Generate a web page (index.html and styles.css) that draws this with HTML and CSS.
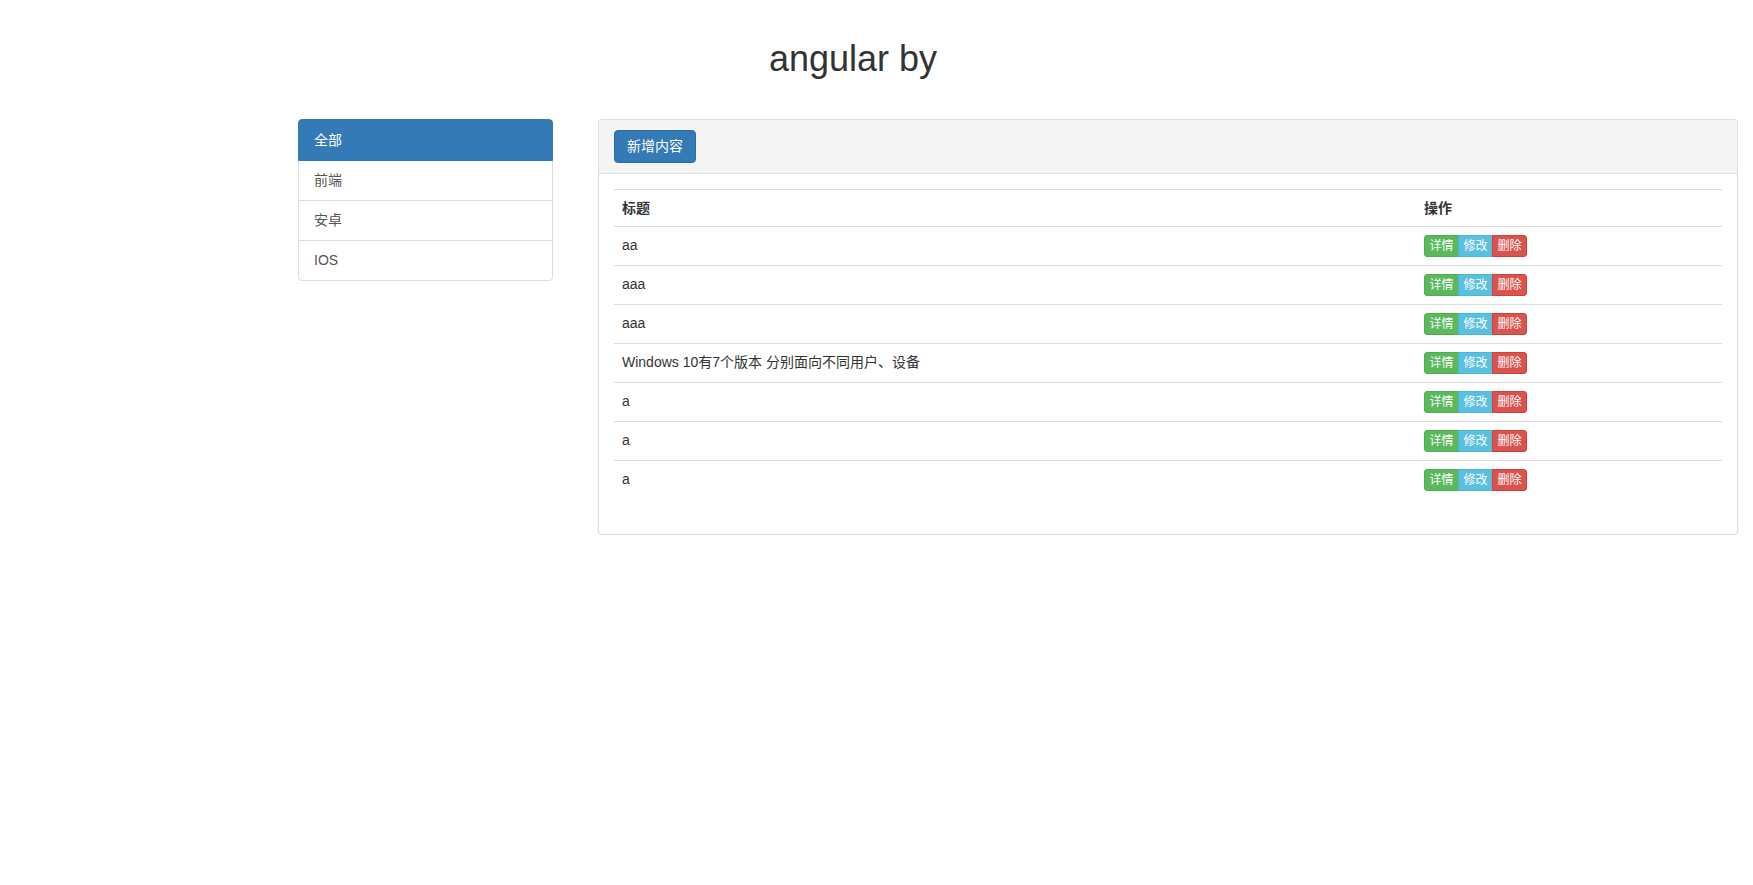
FILE: index.html
```html
<!DOCTYPE html>
<html lang="zh-CN">
<head>
<meta charset="utf-8">
<title>angular by</title>
<link rel="stylesheet" href="styles.css">
</head>
<body>
<header class="page-header">
  <h1 class="page-title">angular by</h1>
</header>
<main class="layout">
  <nav class="list-group">
    <a class="list-group-item active" href="#">全部</a>
    <a class="list-group-item" href="#">前端</a>
    <a class="list-group-item" href="#">安卓</a>
    <a class="list-group-item" href="#">IOS</a>
  </nav>
  <section class="panel">
    <div class="panel-heading">
      <button class="btn btn-primary" type="button">新增内容</button>
    </div>
    <div class="panel-body">
      <table class="table">
        <tbody>
          <tr><th class="col-title">标题</th><th>操作</th></tr>
          <tr><td>aa</td><td><div class="btn-group"><button class="btn-xs btn-success">详情</button><button class="btn-xs btn-info">修改</button><button class="btn-xs btn-danger">删除</button></div></td></tr>
          <tr><td>aaa</td><td><div class="btn-group"><button class="btn-xs btn-success">详情</button><button class="btn-xs btn-info">修改</button><button class="btn-xs btn-danger">删除</button></div></td></tr>
          <tr><td>aaa</td><td><div class="btn-group"><button class="btn-xs btn-success">详情</button><button class="btn-xs btn-info">修改</button><button class="btn-xs btn-danger">删除</button></div></td></tr>
          <tr><td>Windows 10有7个版本 分别面向不同用户、设备</td><td><div class="btn-group"><button class="btn-xs btn-success">详情</button><button class="btn-xs btn-info">修改</button><button class="btn-xs btn-danger">删除</button></div></td></tr>
          <tr><td>a</td><td><div class="btn-group"><button class="btn-xs btn-success">详情</button><button class="btn-xs btn-info">修改</button><button class="btn-xs btn-danger">删除</button></div></td></tr>
          <tr><td>a</td><td><div class="btn-group"><button class="btn-xs btn-success">详情</button><button class="btn-xs btn-info">修改</button><button class="btn-xs btn-danger">删除</button></div></td></tr>
          <tr><td>a</td><td><div class="btn-group"><button class="btn-xs btn-success">详情</button><button class="btn-xs btn-info">修改</button><button class="btn-xs btn-danger">删除</button></div></td></tr>
        </tbody>
      </table>
    </div>
  </section>
</main>
</body>
</html>
```
FILE: styles.css
```css
* { box-sizing: border-box; }

html, body {
  margin: 0;
  padding: 0;
  background: #fff;
}

body {
  font-family: "Liberation Sans", Arial, "Noto Sans CJK SC", sans-serif;
  font-size: 14px;
  line-height: 20px;
  color: #333;
}

.page-header {
  text-align: center;
  padding-right: 47px;
}

.page-title {
  margin: 39px 0 0;
  font-size: 36px;
  font-weight: 500;
  line-height: 40px;
  color: #333;
}

.layout {
  display: flex;
  align-items: flex-start;
  gap: 45px;
  margin-top: 40px;
  padding-left: 298px;
}

.list-group {
  width: 255px;
  flex: none;
  display: flex;
  flex-direction: column;
}

.list-group-item {
  display: block;
  padding: 10px 15px;
  line-height: 19px;
  border: 1px solid #ddd;
  margin-bottom: -1px;
  background: #fff;
  color: #555;
  text-decoration: none;
}

.list-group-item:first-child {
  line-height: 20px;
  border-top-left-radius: 4px;
  border-top-right-radius: 4px;
}

.list-group-item:last-child {
  margin-bottom: 0;
  border-bottom-left-radius: 4px;
  border-bottom-right-radius: 4px;
}

.list-group-item.active {
  background: #337ab7;
  border-color: #337ab7;
  color: #fff;
  position: relative;
  z-index: 2;
}

.panel {
  width: 1140px;
  flex: none;
  border: 1px solid #ddd;
  border-radius: 4px;
  background: #fff;
  box-shadow: 0 1px 1px rgba(0, 0, 0, 0.05);
}

.panel-heading {
  padding: 10px 15px;
  background: #f5f5f5;
  border-bottom: 1px solid #ddd;
  border-top-left-radius: 3px;
  border-top-right-radius: 3px;
}

.btn {
  display: inline-block;
  vertical-align: top;
  padding: 6px 12px;
  font-family: inherit;
  font-size: 14px;
  line-height: 19px;
  border: 1px solid transparent;
  border-radius: 4px;
  cursor: pointer;
}

.btn-primary {
  background: #337ab7;
  border-color: #2e6da4;
  color: #fff;
}

.panel-body {
  padding: 15px;
}

.table {
  width: 100%;
  border-collapse: collapse;
  border-spacing: 0;
  margin-bottom: 20px;
}

.table th,
.table td {
  padding: 8px;
  line-height: 20px;
  text-align: left;
  vertical-align: top;
  border-top: 1px solid #ddd;
}

.table th {
  font-weight: bold;
}

.table .col-title {
  width: 802px;
}

.btn-group {
  display: inline-flex;
  vertical-align: top;
}

.btn-xs {
  display: inline-block;
  padding: 1px 4.5px;
  font-family: inherit;
  font-size: 12px;
  line-height: 18px;
  border: 1px solid transparent;
  border-radius: 0;
  color: #fff;
  cursor: pointer;
}

.btn-xs + .btn-xs {
  margin-left: -1px;
}

.btn-xs:first-child {
  border-top-left-radius: 3px;
  border-bottom-left-radius: 3px;
}

.btn-xs:last-child {
  border-top-right-radius: 3px;
  border-bottom-right-radius: 3px;
}

.btn-success {
  background: #5cb85c;
  border-color: #4cae4c;
}

.btn-info {
  background: #5bc0de;
  border-color: #46b8da;
}

.btn-danger {
  background: #d9534f;
  border-color: #d43f3a;
}
```
